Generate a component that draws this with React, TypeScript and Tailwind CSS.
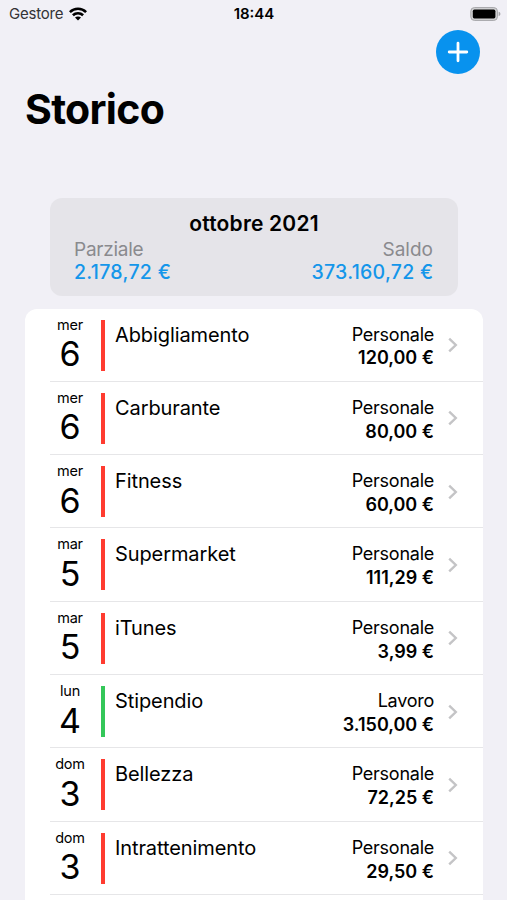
interface Transaction {
    weekday: string;
    day: number;
    category: string;
    account: string;
    amount: string;
    income?: boolean;
}

const transactions: Transaction[] = [
    { weekday: "mer", day: 6, category: "Abbigliamento", account: "Personale", amount: "120,00 €" },
    { weekday: "mer", day: 6, category: "Carburante", account: "Personale", amount: "80,00 €" },
    { weekday: "mer", day: 6, category: "Fitness", account: "Personale", amount: "60,00 €" },
    { weekday: "mar", day: 5, category: "Supermarket", account: "Personale", amount: "111,29 €" },
    { weekday: "mar", day: 5, category: "iTunes", account: "Personale", amount: "3,99 €" },
    { weekday: "lun", day: 4, category: "Stipendio", account: "Lavoro", amount: "3.150,00 €", income: true },
    { weekday: "dom", day: 3, category: "Bellezza", account: "Personale", amount: "72,25 €" },
    { weekday: "dom", day: 3, category: "Intrattenimento", account: "Personale", amount: "29,50 €" },
];

const StatusBar = () => {
    return (
        <div className="grid grid-cols-3 items-center h-[27px] pl-[9px] pr-[6px] text-[15px] leading-[27px]">
            <div className="flex items-center gap-[6px]">
                <span className="text-[#333336] tracking-[-0.2px]">Gestore</span>
                <svg className="w-[18px] h-[14px]" viewBox="0 0 18 14" fill="none" stroke="#000" strokeWidth="2.6">
                    <path d="M0.9 5.1C5.4 0.6 12.6 0.6 17.1 5.1" />
                    <path d="M3.9 8.3C6.8 5.5 11.2 5.5 14.1 8.3" />
                    <path d="M9 13.6L6 10.6C7.6 9.1 10.4 9.1 12 10.6Z" fill="#000" stroke="none" />
                </svg>
            </div>
            <span className="mr-[2px] text-center font-semibold">18:44</span>
            <svg className="w-[31px] h-[14px] justify-self-end" viewBox="0 0 31 14">
                <rect x="0.8" y="0.6" width="26.6" height="12.8" rx="3.6" fill="#d2d2d4" stroke="#a5a5a8" strokeWidth="1" />
                <rect x="2.8" y="2.6" width="22.6" height="8.8" rx="1.6" fill="#000" />
                <path d="M28.6 4.8C31 5.4 31 8.6 28.6 9.2Z" fill="#a5a5a8" />
            </svg>
        </div>
    );
};

const MonthSummary = () => {
    return (
        <div className="ml-[50px] mr-[49px] h-[98px] rounded-[12px] bg-[#e5e4e9] px-[24px] pt-[12px]">
            <h2 className="text-center text-[21px] leading-[27px] font-semibold tracking-[0.2px]">ottobre 2021</h2>
            <div className="mt-[0.5px] flex justify-between text-[19px] leading-[23px] tracking-[-0.25px] text-[#8a8a8e]">
                <span>Parziale</span>
                <span className="mr-[1px] tracking-normal">Saldo</span>
            </div>
            <div className="-mt-[0.5px] flex justify-between text-[19.5px] leading-[24px] font-medium tracking-[0.3px] text-[#1496ea]">
                <span>2.178,72 €</span>
                <span className="mr-[0.5px]">373.160,72 €</span>
            </div>
        </div>
    );
};

const TransactionRow = ({ weekday, day, category, account, amount, income }: Transaction) => {
    return (
        <li className="ml-[25px] flex h-[73.33px] border-b border-[#e6e6e8]">
            {/* Date */}
            <div className="w-[40px] pt-[7px] text-center">
                <div className="text-[14.5px] leading-[18px] tracking-[-0.2px]">{weekday}</div>
                <div className="mt-[1.5px] text-[34px] leading-[38px]">{day}</div>
            </div>
            <div className={income ? "ml-[11px] mt-[11px] h-[51px] w-[4px] bg-[#34c759]" : "ml-[11px] mt-[11px] h-[51px] w-[4px] bg-[#ff3b30]"} />

            <span className="ml-[10px] mt-[14px] text-[20px] leading-[24px] tracking-[-0.1px]">{category}</span>

            <div className="ml-auto mt-[14px] text-right text-[18px] leading-[23px]">
                <div className="tracking-[-0.25px]">{account}</div>
                <div className="mt-[0.8px] font-semibold">{amount}</div>
            </div>
            <svg className="ml-[13.5px] mr-[25.5px] mt-[28.4px] h-[16px] w-[10px]" viewBox="0 0 10 16" fill="none" stroke="#c4c4c6" strokeWidth="2.4">
                <path d="M1.2 1.6L7.8 8L1.2 14.4" />
            </svg>
        </li>
    );
};

const App = () => {
    return (
        <div className="h-[900px] w-[507px] overflow-hidden bg-[#f1f0f6] font-['Inter','Liberation_Sans',sans-serif] text-black">
            <StatusBar />

            {/* Header */}
            <header className="h-[171px]">
                <div className="flex justify-end pr-[27px] pt-[3px]">
                    <button aria-label="Aggiungi" className="flex h-[44px] w-[44px] items-center justify-center rounded-full bg-[#0892ee]">
                        <svg className="h-[22px] w-[22px]" viewBox="0 0 22 22" stroke="#fff" strokeWidth="2.8" strokeLinecap="round">
                            <path d="M11 2.2V19.8M2.2 11H19.8" />
                        </svg>
                    </button>
                </div>
                <h1 className="mt-[10px] pl-[25px] text-[41px] leading-[50px] font-bold tracking-[-0.7px]">Storico</h1>
            </header>

            <MonthSummary />

            <ul className="ml-[25px] mr-[24px] mt-[12.5px] h-[620px] rounded-t-[12px] bg-white">
                {transactions.map((item, index) => (
                    <TransactionRow key={index} {...item} />
                ))}
            </ul>
        </div>
    );
};

export default App;
